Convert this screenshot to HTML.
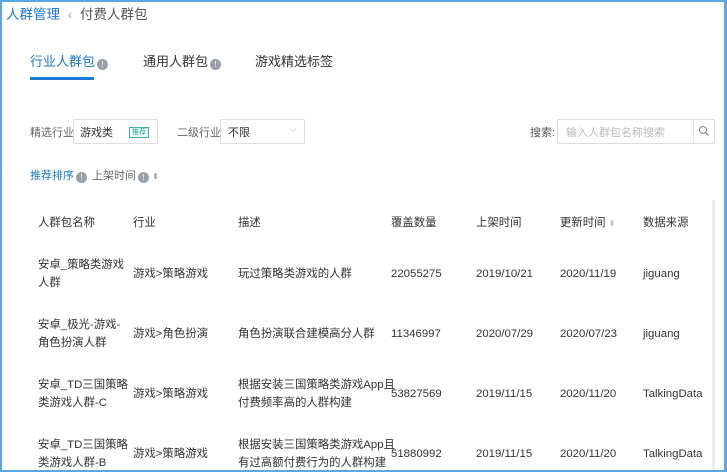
<!DOCTYPE html>
<html><head><meta charset="utf-8"><style>
*{margin:0;padding:0;box-sizing:border-box}
body{width:727px;height:472px;overflow:hidden;background:#fff;font-family:"Liberation Sans","Noto Sans CJK SC",sans-serif;color:#333;position:relative}
.frame{position:absolute;left:0;top:0;width:727px;height:472px;border:2px solid #5aa6e6;border-right-width:3px}
.a{position:absolute;white-space:nowrap}
.i{display:inline-block;width:11px;height:11px;border-radius:50%;background:#9aa0a8;vertical-align:-1px;margin-left:2px;color:#fff;font-size:8px;text-align:center;line-height:11px}
.t{font-size:11.4px;color:#333;line-height:18px}
</style></head><body>
<div class="frame"></div>
<div class="a" style="left:6px;top:3px;font-size:13.5px;color:#1a78d6">人群管理 <span style="color:#aaa;margin:0 4px">‹</span> <span style="color:#555">付费人群包</span></div>
<div class="a" style="left:30px;top:51px;font-size:13px;color:#1a78d6">行业人群包<span class="i">!</span></div>
<div class="a" style="left:30px;top:77px;width:64px;height:3px;background:#1a78d6"></div>
<div class="a" style="left:143px;top:51px;font-size:13px;color:#333">通用人群包<span class="i">!</span></div>
<div class="a" style="left:255px;top:51px;font-size:13px;color:#333">游戏精选标签</div>
<div class="a" style="left:30px;top:124px;font-size:11px;color:#666">精选行业</div>
<div class="a" style="left:73px;top:119px;width:85px;height:25px;border:1px solid #ddd;border-radius:2px"></div>
<div class="a" style="left:80px;top:124px;font-size:11px">游戏类</div>
<div class="a" style="left:129px;top:127px;width:20px;height:11px;border:1px solid #4aa;font-size:7px;color:#2a9;line-height:9px;text-align:center;background:#f0fafa">推荐</div>
<div class="a" style="left:177px;top:124px;font-size:11px;color:#666">二级行业</div>
<div class="a" style="left:220px;top:119px;width:85px;height:25px;border:1px solid #ddd;border-radius:2px"></div>
<div class="a" style="left:228px;top:124px;font-size:11px">不限</div>
<div class="a" style="left:289px;top:124px;font-size:10px;color:#bbb">⌵</div>
<div class="a" style="left:530px;top:124px;font-size:11px;color:#555">搜索:</div>
<div class="a" style="left:557px;top:119px;width:158px;height:25px;border:1px solid #ddd;border-radius:2px"></div>
<div class="a" style="left:693px;top:120px;width:1px;height:23px;background:#e5e5e5"></div>
<div class="a" style="left:566px;top:124px;font-size:11px;color:#bbb">输入人群包名称搜索</div>
<svg class="a" style="left:698px;top:125px" width="12" height="12"><circle cx="5" cy="5" r="3.5" fill="none" stroke="#888" stroke-width="1.1"/><path d="M7.6 7.6L10.5 10.5" stroke="#888" stroke-width="1.2"/></svg>
<div class="a" style="left:30px;top:167px;font-size:11px;color:#1a78d6">推荐排序<span class="i">!</span></div>
<div class="a" style="left:92px;top:167px;font-size:11px;color:#666">上架时间<span class="i">!</span> <span style="font-size:8px;color:#999">⬍</span></div>
<div class="a" style="left:712px;top:200px;width:3px;height:270px;background:#eee"></div>
<div class="a t" style="left:38px;top:214px">人群包名称</div>
<div class="a t" style="left:133px;top:214px">行业</div>
<div class="a t" style="left:238px;top:214px">描述</div>
<div class="a t" style="left:391px;top:214px">覆盖数量</div>
<div class="a t" style="left:476px;top:214px">上架时间</div>
<div class="a t" style="left:560px;top:214px">更新时间 <span style="font-size:8px;color:#bbb">⬍</span></div>
<div class="a t" style="left:643px;top:214px">数据来源</div>

<div class="a t" style="left:38px;top:256px">安卓_策略类游戏<br>人群</div>
<div class="a t" style="left:133px;top:265px">游戏&gt;策略游戏</div>
<div class="a t" style="left:238px;top:265px">玩过策略类游戏的人群</div>
<div class="a t" style="left:391px;top:265px">22055275</div>
<div class="a t" style="left:476px;top:265px">2019/10/21</div>
<div class="a t" style="left:560px;top:265px">2020/11/19</div>
<div class="a t" style="left:643px;top:265px">jiguang</div>

<div class="a t" style="left:38px;top:316px">安卓_极光-游戏-<br>角色扮演人群</div>
<div class="a t" style="left:133px;top:325px">游戏&gt;角色扮演</div>
<div class="a t" style="left:238px;top:325px">角色扮演联合建模高分人群</div>
<div class="a t" style="left:391px;top:325px">11346997</div>
<div class="a t" style="left:476px;top:325px">2020/07/29</div>
<div class="a t" style="left:560px;top:325px">2020/07/23</div>
<div class="a t" style="left:643px;top:325px">jiguang</div>

<div class="a t" style="left:38px;top:376px">安卓_TD三国策略<br>类游戏人群-C</div>
<div class="a t" style="left:133px;top:385px">游戏&gt;策略游戏</div>
<div class="a t" style="left:238px;top:376px">根据安装三国策略类游戏App且<br>付费频率高的人群构建</div>
<div class="a t" style="left:391px;top:385px">53827569</div>
<div class="a t" style="left:476px;top:385px">2019/11/15</div>
<div class="a t" style="left:560px;top:385px">2020/11/20</div>
<div class="a t" style="left:643px;top:385px">TalkingData</div>

<div class="a t" style="left:38px;top:436px">安卓_TD三国策略<br>类游戏人群-B</div>
<div class="a t" style="left:133px;top:445px">游戏&gt;策略游戏</div>
<div class="a t" style="left:238px;top:436px">根据安装三国策略类游戏App且<br>有过高额付费行为的人群构建</div>
<div class="a t" style="left:391px;top:445px">51880992</div>
<div class="a t" style="left:476px;top:445px">2019/11/15</div>
<div class="a t" style="left:560px;top:445px">2020/11/20</div>
<div class="a t" style="left:643px;top:445px">TalkingData</div>
<div class="frame" style="background:none"></div>
</body></html>
